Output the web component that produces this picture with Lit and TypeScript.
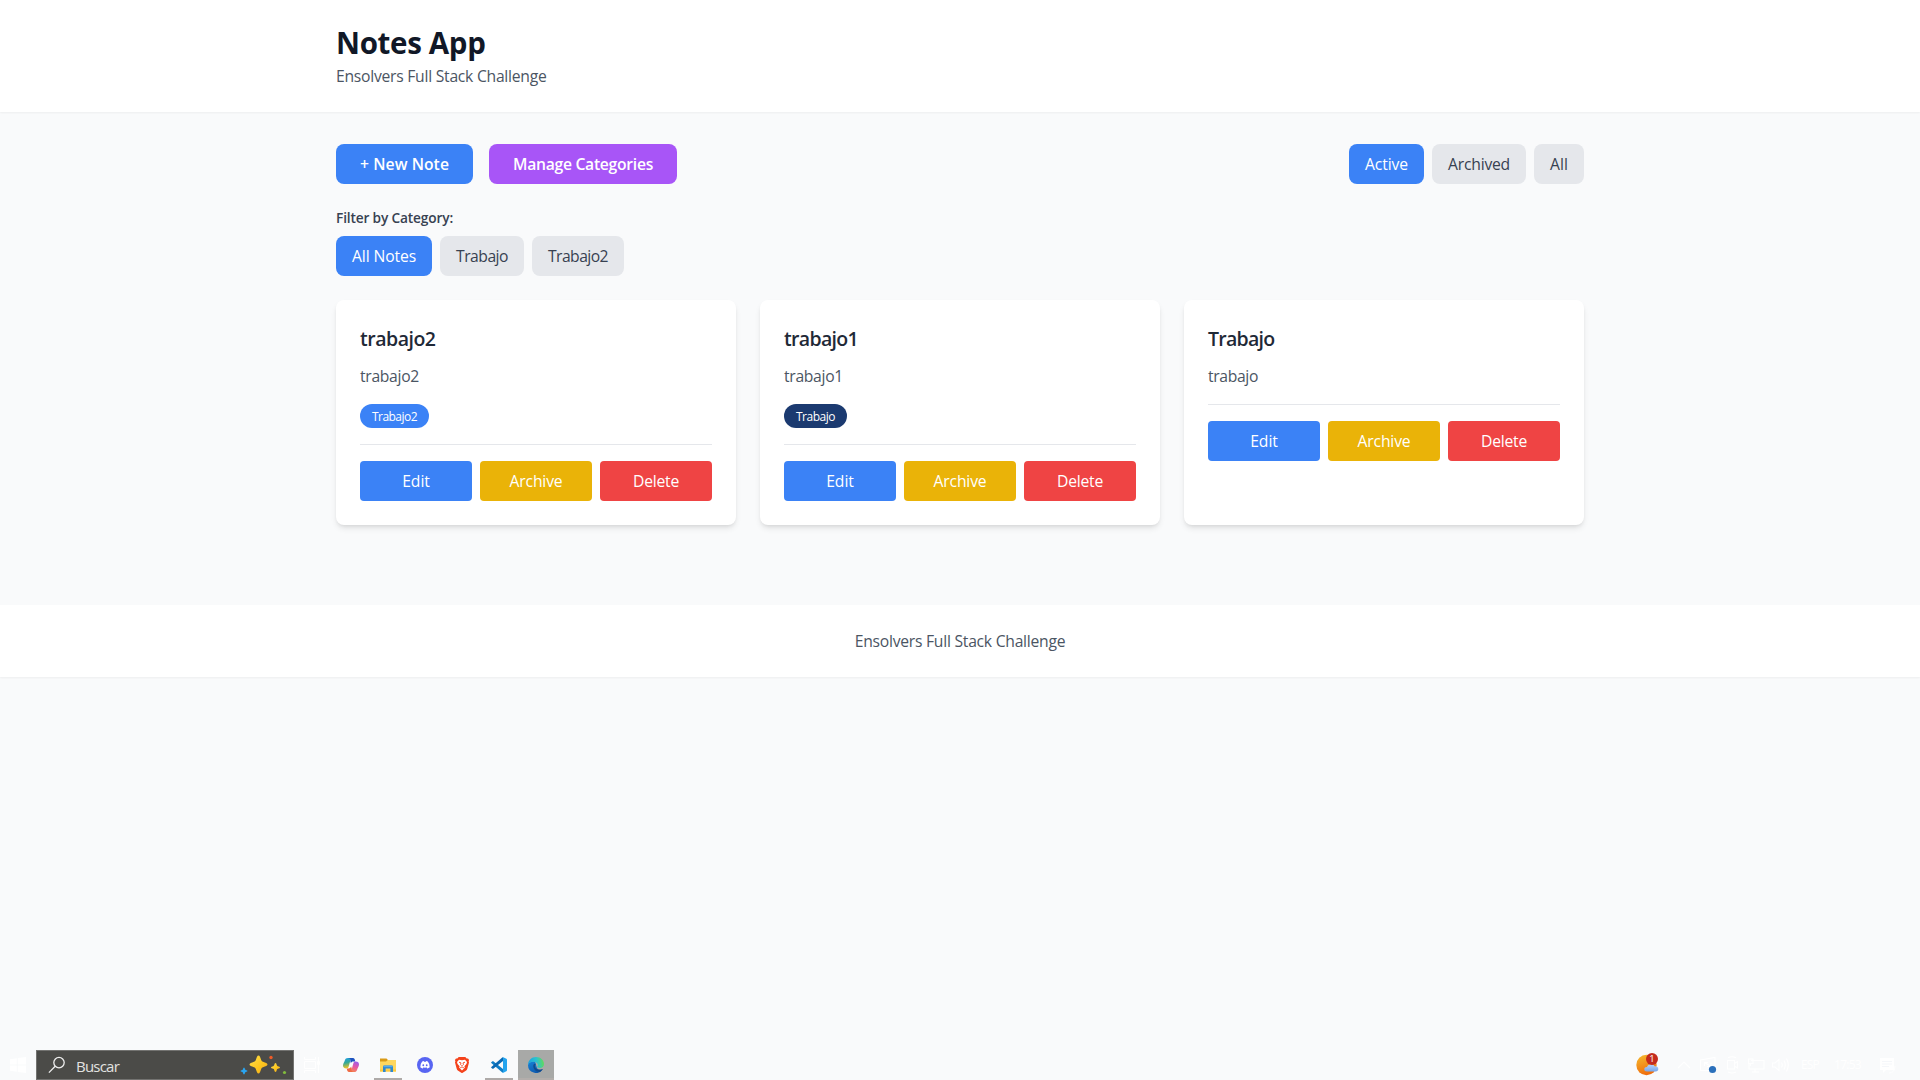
import { LitElement, html, css, svg, nothing } from "lit";
import { customElement, property } from "lit/decorators.js";

/** A run of text tracked so that it takes up a given advance width. */
@customElement("fit-label")
class FitLabel extends LitElement {
  static styles = css`
    :host { display: inline-block; white-space: pre; }
    .run { display: inline-block; }
  `;
  @property() text = "";
  @property({ type: Number }) span = 0;
  render() {
    return html`<span class="run">${this.text}</span>`;
  }
  updated() {
    const run = this.renderRoot.querySelector(".run") as HTMLElement;
    run.style.letterSpacing = "0px";
    const natural = run.getBoundingClientRect().width;
    run.style.letterSpacing = `${(this.span - natural) / this.text.length}px`;
  }
}

const fit = (text: string, span: number) => html`<fit-label .text=${text} .span=${span}></fit-label>`;

interface Note {
  title: string; titleSpan: number;
  body: string; bodySpan: number;
  tag?: string; tagSpan?: number; tone?: string;
}

const notes: Note[] = [
  { title: "trabajo2", titleSpan: 75.5, body: "trabajo2", bodySpan: 59, tag: "Trabajo2", tagSpan: 45, tone: "blue" },
  { title: "trabajo1", titleSpan: 74, body: "trabajo1", bodySpan: 59, tag: "Trabajo", tagSpan: 39, tone: "navy" },
  { title: "Trabajo", titleSpan: 66.5, body: "trabajo", bodySpan: 50 },
];

@customElement("note-card")
class NoteCard extends LitElement {
  static styles = css`
    :host {
      display: block; box-sizing: border-box; padding: 24px; background: #fff; border-radius: 8px;
      box-shadow: 0 4px 6px -1px rgba(0,0,0,.1), 0 2px 4px -2px rgba(0,0,0,.1);
    }
    h3 { margin: 0 0 11px; padding-top: 1px; font-size: 19.5px; line-height: 28px; font-weight: 600; color: #1f2937; }
    p { margin: 0 0 16px; line-height: 24px; color: #4b5563; }
    .tags { display: flex; margin-bottom: 16px; }
    .tag { box-sizing: border-box; height: 24px; border-radius: 12px; padding: 4px 12px; font-size: 12px; line-height: 17px; color: #fff; }
    .blue { background: #3b82f6; }
    .navy { background: #1b3a70; }
    .actions { display: grid; grid-template-columns: repeat(3, 1fr); gap: 8px; padding-top: 16px; border-top: 1px solid #e5e7eb; }
    button {
      border: 0; border-radius: 4px; height: 40px; padding: 0; font: inherit; line-height: 24px; color: #fff;
    }
    .edit { background: #3b82f6; }
    .archive { background: #eab308; }
    .delete { background: #ef4444; }
  `;
  @property({ attribute: false }) note!: Note;
  render() {
    const n = this.note;
    return html`
      <h3>${fit(n.title, n.titleSpan)}</h3>
      <p>${fit(n.body, n.bodySpan)}</p>
      ${n.tag ? html`<div class="tags"><span class="tag ${n.tone}">${fit(n.tag, n.tagSpan!)}</span></div>` : nothing}
      <div class="actions">
        <button class="edit">${fit("Edit", 27.5)}</button>
        <button class="archive">${fit("Archive", 53)}</button>
        <button class="delete">${fit("Delete", 46)}</button>
      </div>`;
  }
}

const star = (x: number, y: number, r: number, fill: string) => svg`
  <path fill=${fill} transform="translate(${x} ${y}) scale(${r})"
    d="M0-1C.14-1 .2-.8 .3-.5C.36-.36 .4-.34 .5-.3C.8-.2 1-.14 1 0S.8.2 .5.3C.4.34 .36.36 .3.5C.2.8 .14 1 0 1S-.2.8-.3.5C-.36.36-.4.34-.5.3C-.8.2-1 .14-1 0S-.8-.2-.5-.3C-.4-.34-.36-.36-.3-.5C-.2-.8-.14-1 0-1Z"/>`;

@customElement("task-bar")
class TaskBar extends LitElement {
  static styles = css`
    :host { display: flex; height: 30px; justify-content: space-between; font-family: "Open Sans", "Noto Sans", sans-serif; }
    .side { display: flex; }
    svg { display: block; flex: none; }
    .cell { display: flex; align-items: center; justify-content: center; box-sizing: border-box; height: 30px; }
    .start { width: 36px; }
    .search {
      display: flex; align-items: center; box-sizing: border-box; width: 258px; height: 30px;
      background: #4b4b48; border: 1px solid #737371; padding: 0 6px 0 11px; color: #e2e2e0; font-size: 15px;
    }
    .search .word { flex: 1; padding-left: 10px; line-height: 28px; padding-top: 1px; }
    .view { width: 36px; }
    .app { width: 37px; }
    .first { margin-left: 2px; }
    .run { background: linear-gradient(#aeaaa8, #aeaaa8) center bottom / 28px 2px no-repeat; }
    .on { margin-left: 1px; width: 36px; background: linear-gradient(#b3aeab, #b3aeab) center bottom / 100% 2px no-repeat #a8a9a7; }
    .tray { color: #fff; font-size: 12px; align-items: center; }
    .weather { margin-right: 17px; }
    .lang { margin-left: 2px; }
    .time { margin-left: 15px; }
    .msg { margin-left: 18px; margin-right: 24px; }
  `;
  render() {
    return html`
      <div class="side">
        <div class="cell start"><svg width="18" height="18" viewBox="0 0 18 18"><path fill="#fff" d="M1 3.2 7.8 2.2V8.6H1ZM8.8 2 17 1V8.6H8.8ZM1 9.6H7.8V15.8L1 14.8ZM8.8 9.6H17V17L8.8 16Z"/></svg></div>
        <div class="search">
          <svg width="18" height="18" viewBox="0 0 18 18" fill="none" stroke="#eee" stroke-width="1.3"><circle cx="11" cy="6.6" r="5.2"/><path d="M7.2 10.3.9 16.6"/></svg>
          <span class="word">${fit("Buscar", 43)}</span>
          <svg width="48" height="22" viewBox="0 0 48 22">
            <defs><linearGradient id="gold" x1="0" y1="0" x2="1" y2="1"><stop offset="0" stop-color="#ffe04a"/><stop offset=".6" stop-color="#fdc51d"/><stop offset="1" stop-color="#eda223"/></linearGradient></defs>
            ${star(19.5, 10.5, 9, "url(#gold)")}${star(36.5, 13.5, 4.5, "url(#gold)")}${star(5, 17, 3.5, "#2aa5f0")}
            <circle cx="32" cy="3.5" r="1.7" fill="#ee5c28"/><circle cx="45.5" cy="18.5" r="1.6" fill="#82bc3d"/>
          </svg>
        </div>
        <div class="cell view"><svg width="18" height="18" viewBox="0 0 18 18" fill="none" stroke="#fff"><path d="M1.5 1V3.5H12.5V1M1.5 17V14.5H12.5V17M1.5 5.5H12.5V12.5H1.5ZM15.5 1V17"/><path fill="#fff" d="M14.5 5.5h2v3h-2Z"/></svg></div>
        <div class="cell app first"><svg width="16" height="16" viewBox="0 0 16 16">
          <defs>
            <linearGradient id="cpA" x1="0" y1="0" x2=".2" y2="1"><stop offset="0" stop-color="#1b9de8"/><stop offset=".5" stop-color="#35a996"/><stop offset="1" stop-color="#f3c321"/></linearGradient>
            <linearGradient id="cpB" x1=".6" y1="0" x2=".3" y2="1"><stop offset="0" stop-color="#a05be8"/><stop offset=".5" stop-color="#e857a0"/><stop offset="1" stop-color="#f58a52"/></linearGradient>
          </defs>
          <path fill="url(#cpA)" d="M5 1H9.5C8 1 7.6 2.5 7 4.8L5.7 9.6C5.3 11 4.6 11.5 3.3 11.5 1 11.5 0 10.2 0 8.6 0 6.8 1.2 5.5 1.9 3.3 2.4 1.8 3.2 1 5 1Z"/>
          <path fill="#1d52c0" d="M5 1H10C11.3 1 11.7 2 12.1 3.8L12.3 4.5H10.3C8.8 4.5 8.3 5 7.9 6.2L7.3 4C7.8 2.3 7 1.2 5 1Z"/>
          <path fill="url(#cpB)" d="M11 15H6.5C8 15 8.4 13.5 9 11.2L10.3 6.4C10.7 5 11.4 4.5 12.7 4.5 15 4.5 16 5.8 16 7.4 16 9.2 14.8 10.5 14.1 12.7 13.6 14.2 12.8 15 11 15Z"/>
          <path fill="#ef6b45" d="M11 15H6C4.7 15 4.3 14 3.9 12.2L3.7 11.5H5.2C6.7 11.5 7.7 10.8 8.1 9.6L8.9 12C8.4 13.7 9 14.8 11 15Z"/></svg></div>
        <div class="cell app run"><svg width="16" height="16" viewBox="0 0 16 16">
          <path fill="#d99a16" d="M0 1.5h6.5L8 3h7v3H0Z"/><path fill="#ffd75e" d="M0 4.6h6l1.8-1.6H16V14.5H0Z"/><path fill="#fbc941" d="M0 12.5h16v2H0Z"/>
          <path fill="#2e88d0" d="M3 15V9.8Q3 8.4 4.4 8.4H11.6Q13 8.4 13 9.8V15H10.4V11.6H5.6V15Z"/><path fill="#55aaea" d="M3.5 8.6h9v1.6h-9Z"/></svg></div>
        <div class="cell app"><svg width="16" height="16" viewBox="0 0 16 16"><circle cx="8" cy="8" r="8" fill="#5865f2"/><path fill="#fff" d="M5.2 4.6Q6 4.2 6.8 4.1L7.1 4.7H8.9L9.2 4.1Q10 4.2 10.8 4.6 12.8 7 12.7 10.3 11.6 11.3 10.2 11.6L9.6 10.7 10.2 10.3Q8 11 5.8 10.3L6.4 10.7 5.8 11.6Q4.4 11.3 3.3 10.3 3.2 7 5.2 4.6Z"/><ellipse cx="6.3" cy="8.2" rx=".9" ry="1" fill="#5865f2"/><ellipse cx="9.7" cy="8.2" rx=".9" ry="1" fill="#5865f2"/></svg></div>
        <div class="cell app"><svg width="16" height="16" viewBox="0 0 16 16"><path fill="#f4421b" d="M4.7 0H11.3L12.7 1.6 14 1.4 15.1 2.9 14.6 4.3 15 5.4 13.3 11.8Q13 12.8 12.2 13.4L8.7 15.8Q8 16.2 7.3 15.8L3.8 13.4Q3 12.8 2.7 11.8L1 5.4 1.4 4.3.9 2.9 2 1.4 3.3 1.6Z"/><path fill="#fff" d="M5 2.7 8 3.2 11 2.7 13 5.1 12.4 7.1 10.4 9.3 10.9 10.4 8 13.5 5.1 10.4 5.6 9.3 3.6 7.1 3 5.1Z"/><path fill="none" stroke="#f4421b" stroke-width=".9" d="M5 5.2 7 5.9 6.6 7.6 7.6 8.7M11 5.2 9 5.9 9.4 7.6 8.4 8.7M6.2 10.8 8 9.9 9.8 10.8"/></svg></div>
        <div class="cell app run"><svg width="16" height="16" viewBox="0 0 16 16"><path fill="#0f7dc6" d="M.3 5.3 1.4 4.3Q1.8 4 2.3 4.3L12 12V15.6Q11.3 15.6 11 15.2L.3 6.1Q-.1 5.7.3 5.3Z"/><path fill="#0b69b3" d="M.3 10.7 1.4 11.7Q1.8 12 2.3 11.7L12 4V.2Q11.3.3 11 .7L.3 9.9Q-.1 10.3.3 10.7Z"/><path fill="#24a4ee" d="M11.3 15.9Q12 15.6 12 14.9V1.1Q12 .4 11.3.1L11.7 0 15.4 1.8Q16 2.1 16 2.7V13.3Q16 13.9 15.4 14.2L11.9 16Z"/></svg></div>
        <div class="cell on"><svg width="16" height="16" viewBox="0 0 16 16">
          <defs>
            <linearGradient id="eg" x1="0" y1=".5" x2="1" y2=".4"><stop offset="0" stop-color="#1ba1df"/><stop offset=".55" stop-color="#2cc3cf"/><stop offset="1" stop-color="#62dc55"/></linearGradient>
            <linearGradient id="ed" x1="0" y1="0" x2=".5" y2="1"><stop offset="0" stop-color="#1683d6"/><stop offset="1" stop-color="#0f5bb0"/></linearGradient>
          </defs>
          <path fill="url(#ed)" d="M0 8A8 8 0 0 0 14.6 12.5C12 14 9.2 12.7 8.6 10L7 4.3C3 4.3.7 5.5 0 8Z"/>
          <path fill="#114a8b" d="M5.3 8.4C5 12 8 15 11.8 14.9 13 14.4 14 13.5 14.8 12.3 14.9 12 14.6 11.9 14.4 12 11.5 13.2 7.4 12.6 6.9 9.2 6.8 8 7.2 7.4 7.8 6.9 6.5 6.6 5.4 7.3 5.3 8.4Z"/>
          <path fill="url(#eg)" d="M0 8C0 3.5 3.6 0 8 0 13 0 16 3.6 16 6.9 16 9.4 14.2 10.9 12 10.9 10 10.9 9.1 10.3 9.1 9.8 9.1 9.5 9.9 9.2 9.9 7.9 9.9 6 7.9 4.7 5.5 4.7 2.5 4.7.5 6 0 8Z"/></svg></div>
      </div>
      <div class="side tray">
        <svg class="weather" width="24" height="26" viewBox="0 0 24 26">
          <defs><linearGradient id="sun" x1=".3" y1="0" x2=".6" y2="1"><stop offset="0" stop-color="#f5b52c"/><stop offset="1" stop-color="#ef6a0c"/></linearGradient>
          <linearGradient id="cl" x1="0" y1="0" x2="0" y2="1"><stop offset="0" stop-color="#b6d3fb"/><stop offset="1" stop-color="#78a6ea"/></linearGradient></defs>
          <circle cx="10.5" cy="13.000" r="10.2" fill="url(#sun)"/>
          <path fill="url(#cl)" d="M11 19.500Q8.3 19.500 8.3 17.3T11 15.100Q12 12.300 15 12.300T18.6 14.300Q22.3 14.100 22.3 17.100 22.3 19.500 19.6 19.500Z"/>
          <circle cx="16" cy="7" r="6" fill="#c42b1c"/><text x="16" y="10.400" text-anchor="middle" font-size="9.5" font-family="Open Sans" fill="#fff">1</text>
        </svg>
        <svg width="122" height="20" viewBox="0 0 122 20" fill="none" stroke="#fff" stroke-width="1.1">
          <path d="M1 13 7 7 13 13"/>
          <path d="M23.5 5 38 2.5V15.500H23.500ZM27.500 11V7.500H31M34 7.500V11.500H30M27.500 7.500 34 11.500"/>
          <circle cx="35.500" cy="14.500" r="3.600" fill="#2b70bb" stroke="none"/>
          <path d="M50.500 5.500H57.500V14H50.500ZM57.500 8.500 60.500 6.500V13L57.500 11M51 2.700Q55 .8 59 2.700M51 17Q55 19 59 17"/>
          <path d="M74 5.500H87V14H72V9M78 14V17M75 17H82M71.500 4V8.500H76V4ZM73.500 8.500V11"/>
          <path d="M95.500 8H98L102 4.500V15.500L98 12H95.500ZM104.500 7.500Q106 10 104.500 12.500M107 5.500Q109.500 10 107 14.500M109.500 3.500Q113 10 109.500 16.500"/>
        </svg>
        <span class="lang">${fit("ESP", 18)}</span>
        <span class="time">${fit("17:53", 27)}</span>
        <svg class="msg" width="17" height="17" viewBox="0 0 17 17"><path fill="#fff" d="M1 1H15V13H7L4 16V13H1Z"/><path fill="none" stroke="#f5f7fa" d="M3 4.500H13M3 7H13M3 9.500H10"/><path stroke="#fff" fill="none" d="M10 16Q16 16 16 9M10 13.500 13 10"/></svg>
      </div>`;
  }
}

@customElement("app-root")
class AppRoot extends LitElement {
  static styles = css`
    :host {
      display: flex; flex-direction: column; height: 1080px; background: #f9fafb; overflow: hidden;
      font-family: "Open Sans", "Noto Sans", sans-serif; font-size: 15.7px; line-height: 24px; color: #374151;
    }
    .wrap { box-sizing: border-box; width: 1280px; margin: 0 auto; padding: 0 16px; }
    header { background: #fff; padding: 24px 0; box-shadow: 0 1px 2px rgba(0,0,0,.05); }
    h1 { margin: 0 0 3px; padding-top: 1px; font-size: 29.5px; line-height: 36px; font-weight: 700; color: #111827; }
    .sub { margin: 0; color: #4b5563; }
    main { padding: 32px 0; }
    .bar { display: flex; justify-content: space-between; margin-bottom: 24px; }
    .group { display: flex; gap: 16px; }
    .tight { display: flex; gap: 8px; }
    button { border: 0; height: 40px; border-radius: 8px; font: inherit; padding: 0 16px; background: #e5e7eb; color: #374151; }
    .primary, .purple { padding: 0 24px; font-weight: 600; color: #fff; }
    .primary, .on { background: #3b82f6; color: #fff; }
    .purple { background: #a855f7; }
    h2 { margin: 0 0 8px; font-size: 13.7px; line-height: 20px; font-weight: 600; }
    .cards { display: grid; grid-template-columns: repeat(3, 1fr); gap: 24px; margin-top: 24px; }
    footer { margin-top: 48px; padding: 24px 0; background: #fff; text-align: center; color: #4b5563; box-shadow: 0 1px 2px rgba(0,0,0,.05); }
    task-bar { margin-top: auto; }
  `;
  render() {
    return html`
      <header><div class="wrap">
        <h1>${fit("Notes App", 149.5)}</h1>
        <p class="sub">${fit("Ensolvers Full Stack Challenge", 210.5)}</p>
      </div></header>
      <main><div class="wrap">
        <div class="bar">
          <div class="group">
            <button class="primary">${fit("+ New Note", 89)}</button>
            <button class="purple">${fit("Manage Categories", 140)}</button>
          </div>
          <div class="tight">
            <button class="on">${fit("Active", 43)}</button>
            <button>${fit("Archived", 62)}</button>
            <button>${fit("All", 18)}</button>
          </div>
        </div>
        <h2>${fit("Filter by Category:", 117)}</h2>
        <div class="tight">
          <button class="on">${fit("All Notes", 64)}</button>
          <button>${fit("Trabajo", 52)}</button>
          <button>${fit("Trabajo2", 60)}</button>
        </div>
        <div class="cards">${notes.map((n) => html`<note-card .note=${n}></note-card>`)}</div>
      </div></main>
      <footer>${fit("Ensolvers Full Stack Challenge", 210.5)}</footer>
      <task-bar></task-bar>`;
  }
}
